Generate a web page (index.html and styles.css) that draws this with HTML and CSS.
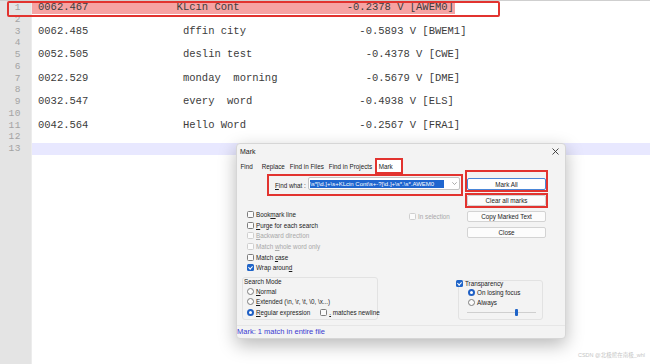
FILE: index.html
```html
<!DOCTYPE html>
<html>

<head>
  <title>Mark - Notepad++</title>
  <link rel="stylesheet" href="styles.css">
</head>

<body>
  <div class="editor">
    <div class="gutter">
      <div class="ln">1</div>
      <div class="ln">2</div>
      <div class="ln">3</div>
      <div class="ln">4</div>
      <div class="ln">5</div>
      <div class="ln">6</div>
      <div class="ln">7</div>
      <div class="ln">8</div>
      <div class="ln">9</div>
      <div class="ln">10</div>
      <div class="ln">11</div>
      <div class="ln">12</div>
      <div class="ln">13</div>
    </div>
    <div class="text">
      <div class="line"><span class="marked">0062.467              KLcin Cont                 -0.2378 V [AWEM0]</span></div>
      <div class="line"></div>
      <div class="line">0062.485               dffin city                  -0.5893 V [BWEM1]</div>
      <div class="line"></div>
      <div class="line">0052.505               deslin test                  -0.4378 V [CWE]</div>
      <div class="line"></div>
      <div class="line">0022.529               monday  morning              -0.5679 V [DME]</div>
      <div class="line"></div>
      <div class="line">0032.547               every  word                 -0.4938 V [ELS]</div>
      <div class="line"></div>
      <div class="line">0042.564               Hello Word                  -0.2567 V [FRA1]</div>
      <div class="line"></div>
      <div class="line current"></div>
    </div>
    <!-- red frame drawn round the matched line -->
    <div class="match-frame"></div>
  </div>

  <div class="dialog">
    <div class="dlg-title">
      <span>Mark</span>
      <svg class="close-x" width="7" height="7" viewBox="0 0 7 7">
        <path d="M0.5 0.5 L6.5 6.5 M6.5 0.5 L0.5 6.5" stroke="#333" stroke-width="0.9" />
      </svg>
    </div>

    <div class="tabs">
      <span class="tab tab-first">Find</span>
      <span class="tab">Replace</span>
      <span class="tab">Find in Files</span>
      <span class="tab">Find in Projects</span>
      <span class="tab tab-active">Mark</span>
    </div>

    <div class="dlg-main">
      <div class="col-left">
        <div class="find-row">
          <span class="find-label"><u>F</u>ind what :</span>
          <div class="find-input">
            <span class="find-sel">\s*[\d.]+\s+KLcin Cont\s+-?[\d.]+\s*.\s*.AWEM0</span>
            <svg class="chev" width="5" height="3" viewBox="0 0 5 3">
              <path d="M0.3 0.3 L2.5 2.5 L4.7 0.3" fill="none" stroke="#888" stroke-width="0.7" />
            </svg>
          </div>
        </div>

        <div class="opts">
          <div class="check-list">
            <div class="opt"><span class="cb"></span><span>Book<u>m</u>ark line</span></div>
            <div class="opt"><span class="cb"></span><span><u>P</u>urge for each search</span></div>
            <div class="opt off"><span class="cb"></span><span><u>B</u>ackward direction</span></div>
            <div class="opt off"><span class="cb"></span><span>Match <u>w</u>hole word only</span></div>
            <div class="opt"><span class="cb"></span><span>Match <u>c</u>ase</span></div>
            <div class="opt"><span class="cb on"></span><span>Wrap aroun<u>d</u></span></div>
          </div>
          <div class="opt off in-sel"><span class="cb"></span><span>In selection</span></div>
        </div>
      </div>

      <div class="col-right">
        <div class="hl-box box-markall">
          <div class="btn btn-default">Mark All</div>
        </div>
        <div class="hl-box box-clear">
          <div class="btn">Clear all marks</div>
        </div>
        <div class="btn btn-copy">Copy Marked Text</div>
        <div class="btn btn-close">Close</div>
      </div>
    </div>

    <div class="dlg-bottom">
      <div class="group search-mode">
        <div class="group-label">Search Mode</div>
        <div class="opt radio-row"><span class="rb"></span><span><u>N</u>ormal</span></div>
        <div class="opt radio-row"><span class="rb"></span><span><u>E</u>xtended (\n, \r, \t, \0, \x...)</span></div>
        <div class="opt radio-row"><span class="rb on"></span><span><u>R</u>egular expression</span><span class="cb newline-cb"></span><span><u>.</u> matches newline</span></div>
      </div>

      <div class="group trans">
        <div class="opt trans-head"><span class="cb on"></span><span>Transparency</span></div>
        <div class="opt trans-row"><span class="rb on"></span><span>On losing focus</span></div>
        <div class="opt trans-row"><span class="rb"></span><span>Always</span></div>
        <div class="slider">
          <span class="thumb"></span>
        </div>
      </div>
    </div>

    <div class="status">Mark: 1 match in entire file</div>
  </div>

  <div class="watermark">CSDN @北极熊在南极_whl</div>
</body>

</html>
```

FILE: styles.css
```css
html,
body {
  margin: 0;
  padding: 0;
}

body {
  width: 650px;
  height: 364px;
  overflow: hidden;
  background: #ffffff;
  position: relative;
}

/* editor */

.editor {
  height: 364px;
  display: flex;
  border-top: 1px solid #cfcfcf;
  box-sizing: border-box;
  position: relative;
}

.gutter {
  width: 31px;
  padding-top: 1px;
  background: #e4e4e4;
  border-right: 1px solid #ececec;
  font-family: "Liberation Mono", monospace;
  font-size: 9.5px;
  color: #a3a3a3;
}

.ln {
  height: 11.75px;
  line-height: 11.75px;
  text-align: right;
  padding-right: 10px;
  letter-spacing: 0.5px;
}

.text {
  flex: 1;
  padding-top: 1px;
  font-family: "Liberation Mono", monospace;
  font-size: 10.5px;
  color: #3c3c3c;
}

.line {
  height: 11.75px;
  line-height: 11.75px;
  white-space: pre;
  padding-left: 6px;
}

.marked {
  display: inline-block;
  margin-left: -6px;
  padding: 0 1px 0 6px;
  background: #f6a3a3;
}

.current {
  background: #e8e8ff;
}

.match-frame {
  position: absolute;
  left: 7px;
  top: 0;
  width: 493px;
  height: 16px;
  border: 2px solid #e2332f;
  border-radius: 2px;
  box-sizing: border-box;
}

/* dialog */

.dialog {
  position: absolute;
  left: 236px;
  top: 143px;
  width: 330px;
  height: 196px;
  box-sizing: border-box;
  background: #f3f3f3;
  border: 1px solid #d6d6d6;
  border-radius: 4px;
  box-shadow: 0 6px 18px rgba(0, 0, 0, 0.28);
  font-family: "Liberation Sans", Arial, sans-serif;
  font-size: 6.3px;
  color: #1b1b1b;
  display: flex;
  flex-direction: column;
}

.dlg-title {
  height: 15px;
  display: flex;
  align-items: center;
  justify-content: space-between;
  padding: 0 6px 0 3px;
  font-size: 7px;
}

.tabs {
  height: 14px;
  display: flex;
  align-items: center;
  padding-left: 1px;
}

.tab {
  padding: 0 2.5px;
}

.tab-first {
  margin-right: 4px;
}

.tab-active {
  align-self: stretch;
  display: flex;
  align-items: center;
  margin-left: 1px;
  padding: 0 9px 0 3px;
  background: #ffffff;
  outline: 2px solid #e2332f;
  outline-offset: -1px;
}

.dlg-main {
  height: 104px;
  display: flex;
  padding: 0 17px 0 3px;
}

.col-left {
  width: 222px;
}

.col-right {
  width: 84px;
  margin-left: 3px;
}

.find-row {
  width: 196px;
  height: 22px;
  margin: 1px 0 0 27px;
  box-sizing: border-box;
  border: 2px solid #e2332f;
  display: flex;
  align-items: center;
  padding-left: 6px;
}

.find-label {
  width: 33px;
}

.find-input {
  width: 152px;
  height: 13px;
  margin-top: -3px;
  box-sizing: border-box;
  background: #ffffff;
  border: 1px solid #c4c4c4;
  border-radius: 2px;
  display: flex;
  align-items: center;
  padding-left: 1px;
}

.find-sel {
  height: 8px;
  line-height: 8px;
  width: 134px;
  overflow: hidden;
  white-space: nowrap;
  background: #1f66cf;
  color: #ffffff;
  font-size: 6px;
}

.chev {
  margin-left: auto;
  margin-right: 2px;
}

.opts {
  margin-top: 13px;
  display: grid;
  grid-template-columns: 169px auto;
}

.opt {
  height: 10.7px;
  display: flex;
  align-items: center;
  white-space: nowrap;
}

.check-list .opt {
  padding-left: 7px;
}

.off {
  color: #a8a8a8;
}

.in-sel {
  margin-top: 2px;
}

.cb {
  width: 7px;
  height: 7px;
  box-sizing: border-box;
  border: 1px solid #7d7d7d;
  border-radius: 1.5px;
  background: #fbfbfb;
  margin-right: 2px;
  flex-shrink: 0;
}

.off .cb {
  border-color: #cfcfcf;
}

.cb.on {
  border: none;
  background: #1f64c8;
  position: relative;
}

.cb.on::after {
  content: "";
  position: absolute;
  left: 2.3px;
  top: 1px;
  width: 1.6px;
  height: 3.2px;
  border: solid #ffffff;
  border-width: 0 0.8px 0.8px 0;
  transform: rotate(45deg);
}

.rb {
  width: 7px;
  height: 7px;
  box-sizing: border-box;
  border: 1px solid #7d7d7d;
  border-radius: 50%;
  background: #fbfbfb;
  margin-right: 2px;
  flex-shrink: 0;
}

.rb.on {
  border: 2.2px solid #1f5fc4;
  background: #ffffff;
}

/* buttons */

.hl-box {
  width: 83px;
  box-sizing: border-box;
  border: 2px solid #e2332f;
}

.box-markall {
  margin-top: -3px;
  padding-top: 6px;
}

.box-clear {
  margin-top: 1px;
}

.btn {
  width: 79px;
  height: 11px;
  box-sizing: border-box;
  background: #fcfcfc;
  border: 1px solid #d3d3d3;
  border-radius: 2px;
  display: flex;
  align-items: center;
  justify-content: center;
}

.btn-default {
  height: 12px;
  background: #ffffff;
  border-color: #4a86d8;
}

.btn-copy {
  margin: 3px 0 0 2px;
}

.btn-close {
  margin: 5px 0 0 2px;
}

/* bottom groups */

.dlg-bottom {
  height: 43px;
  display: flex;
  padding-left: 5px;
}

.group {
  box-sizing: border-box;
  border: 1px solid #e2e2e2;
  border-radius: 3px;
}

.search-mode {
  width: 136px;
  height: 43px;
}

.group-label {
  height: 8px;
  line-height: 8px;
  padding-left: 1px;
}

.radio-row {
  height: 10.5px;
  padding-left: 4px;
}

.newline-cb {
  margin-left: 10px;
}

.trans {
  width: 85px;
  height: 40px;
  margin: 3px 0 0 80px;
}

.trans-head {
  height: 8px;
  margin: -2px 0 0 -3px;
}

.trans-row {
  height: 10.5px;
  padding-left: 9px;
}

.slider {
  position: relative;
  width: 69px;
  height: 8px;
  margin-left: 8px;
  background: linear-gradient(#cfcfcf, #cfcfcf) 0 50% / 100% 1px no-repeat;
}

.thumb {
  position: absolute;
  left: 48px;
  top: 0.5px;
  width: 3px;
  height: 7px;
  border-radius: 1px;
  background: #1f64c8;
}

.status {
  margin-top: auto;
  height: 12px;
  line-height: 12px;
  border-top: 1px solid #e6e6e6;
  font-size: 7.5px;
  color: #3a3ad2;
  padding-left: 0;
}

.watermark {
  position: absolute;
  right: 5px;
  bottom: 5px;
  font-family: "Liberation Sans", "Noto Sans CJK SC", sans-serif;
  font-size: 5.5px;
  color: #c6c6c6;
}
```
